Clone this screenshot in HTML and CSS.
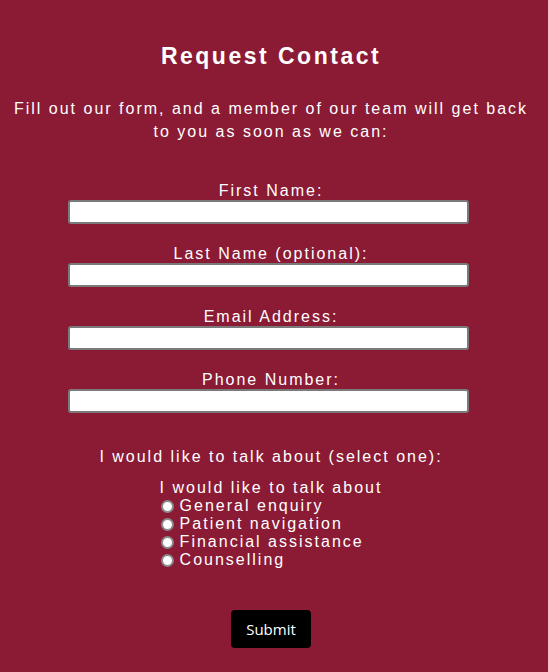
FILE: index.html
```html
<!DOCTYPE html>
<html>
<head>
<meta charset="utf-8">
<link rel="stylesheet" href="styles.css">
</head>
<body>
<main class="page">
  <h1 class="title">Request Contact</h1>
  <p class="intro">Fill out our form, and a member of our team will get back to you as soon as we can:</p>
  <form class="form">
    <div class="field">
      <label class="label" for="fn">First Name:</label>
      <input class="input" id="fn" type="text">
    </div>
    <div class="field">
      <label class="label" for="ln">Last Name (optional):</label>
      <input class="input" id="ln" type="text">
    </div>
    <div class="field">
      <label class="label" for="em">Email Address:</label>
      <input class="input" id="em" type="text">
    </div>
    <div class="field">
      <label class="label" for="ph">Phone Number:</label>
      <input class="input" id="ph" type="text">
    </div>
    <p class="topic">I would like to talk about (select one):</p>
    <div class="radios">
      <div class="legend">I would like to talk about</div>
      <label class="opt"><span class="dot"></span>General enquiry</label>
      <label class="opt"><span class="dot"></span>Patient navigation</label>
      <label class="opt"><span class="dot"></span>Financial assistance</label>
      <label class="opt"><span class="dot"></span>Counselling</label>
    </div>
    <div class="actions">
      <button class="submit" type="button">Submit</button>
    </div>
  </form>
</main>
</body>
</html>
```
FILE: styles.css
```css
html, body {
  margin: 0;
  padding: 0;
  background: #8b1a35;
}
body {
  font-family: "Liberation Sans", Arial, sans-serif;
  color: #fff;
  height: 672px;
}
.page {
  display: flex;
  flex-direction: column;
  align-items: center;
  padding: 42px 6px 0 0;
}
.title {
  margin: 0;
  font-size: 23px;
  font-weight: bold;
  letter-spacing: 2.5px;
  line-height: 28px;
}
.intro {
  margin: 27px 0 0;
  font-size: 16px;
  letter-spacing: 2px;
  line-height: 23px;
  text-align: center;
  padding: 0 12px;
}
.form {
  display: flex;
  flex-direction: column;
  align-items: center;
  margin-top: 39px;
}
.field {
  display: flex;
  flex-direction: column;
  align-items: center;
  margin-bottom: 21px;
}
.label {
  font-size: 16px;
  letter-spacing: 2px;
  line-height: 18px;
}
.input {
  box-sizing: border-box;
  width: 401px;
  height: 24px;
  margin: 0 6px 0 0;
  background: #fff;
  border: 2px solid #7a7a7a;
  border-radius: 3px;
}
.topic {
  margin: 14px 0 0;
  font-size: 16px;
  letter-spacing: 2px;
  line-height: 18px;
}
.radios {
  margin: 13px 0 0 0;
  display: flex;
  flex-direction: column;
  font-size: 16px;
  letter-spacing: 2px;
  line-height: 18px;
}
.opt {
  display: flex;
  align-items: center;
  gap: 6px;
}
.dot {
  box-sizing: border-box;
  width: 13px;
  height: 13px;
  border-radius: 50%;
  background: #fff;
  border: 2px solid #8a8a8a;
  flex: none;
  margin-left: 1px;
}
.actions {
  margin-top: 41px;
}
.submit {
  width: 80px;
  height: 38px;
  background: #000;
  color: #fff;
  border: none;
  border-radius: 4px;
  font-family: "Open Sans", "Noto Sans", sans-serif;
  font-size: 15px;
  padding: 0;
}
```
